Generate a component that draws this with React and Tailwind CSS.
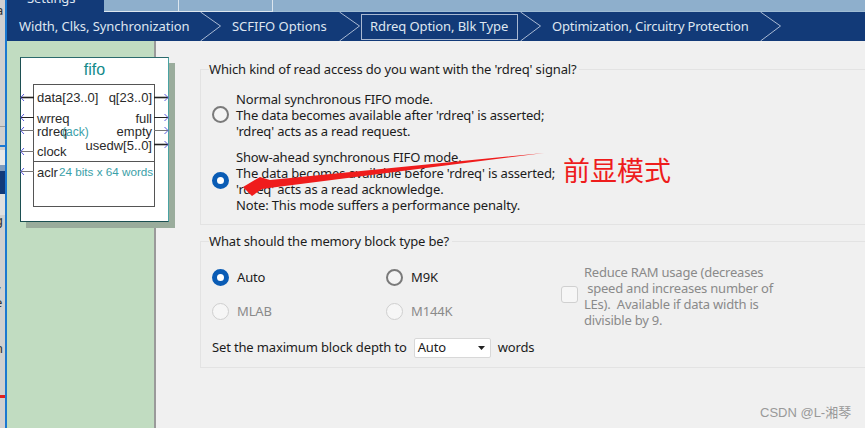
const ui = { fontFamily: '"Noto Sans", sans-serif' };
const arial = { fontFamily: '"Liberation Sans", sans-serif' };

function Chevron() {
  return (
    <svg width="22" height="29" viewBox="0 0 22 29" className="shrink-0">
      <path d="M0.5 0 L20.5 14 L0.5 29" fill="none" stroke="#a9b9d2" strokeWidth="1" />
    </svg>
  );
}

function Radio({ checked, disabled, nudge }) {
  const extra = nudge ? " -mt-[2px]" : "";
  if (checked) {
    return <span className={"block w-[17px] h-[17px] shrink-0 rounded-full border-[5px] border-[#0a5cb5] bg-white" + extra} />;
  }
  return (
    <span
      className={
        (disabled
          ? "block w-[17px] h-[17px] shrink-0 rounded-full border border-[#cfcfcf] bg-[#f6f6f6]"
          : "block w-[17px] h-[17px] shrink-0 rounded-full border-2 border-[#7a7a7a] bg-[#f4f4f4]") + extra
      }
    />
  );
}

function Pin({ x, y, side, thick, gray }) {
  const color = gray ? "#777" : "#222";
  return (
    <svg className="absolute" style={{ left: x, top: y }} width="15" height="9" viewBox="0 0 15 9">
      <path d="M0 4.5 H14" stroke={color} strokeWidth={thick ? 1.6 : 1} />
      {side === "l" ? (
        <path d="M4 1 L0.8 4.5 L4 8" fill="none" stroke="#5a5ae0" strokeWidth="1" />
      ) : (
        <path d="M10.5 1 L14 4.5 L10.5 8" fill="none" stroke="#5a5ae0" strokeWidth="1" />
      )}
    </svg>
  );
}

function Label({ x, y, children, right, color = "#2a2a2a", size = 13 }) {
  const pos = right ? { right: x, top: y } : { left: x, top: y };
  return (
    <span className="absolute whitespace-nowrap leading-none tracking-normal" style={{ ...pos, ...arial, color, fontSize: size }}>
      {children}
    </span>
  );
}

function Symbol() {
  return (
    <div className="relative w-[149px] h-[165px] ml-[13px] mt-[16px] bg-white border border-[#1c4f52] border-r-[#4aa3a3] border-t-[#2c6a6c] shadow-[6px_6px_0_0_#9aac9c]">
      <div className="text-center text-[#138a8a] text-[16px] leading-none mt-[4px] tracking-normal" style={arial}>fifo</div>
      <div className="absolute left-[12px] top-[26px] w-[122px] h-[123px] border border-[#555]">
        <div className="absolute left-0 right-0 top-[76px] border-t border-[#555]" />
      </div>
      <Pin x={-1} y={35} side="l" thick />
      <Pin x={-1} y={55} side="l" />
      <Pin x={-1} y={68} side="l" gray />
      <Pin x={-1} y={89} side="l" gray />
      <Pin x={-1} y={109} side="l" gray />
      <Pin x={133} y={35} side="r" thick />
      <Pin x={133} y={55} side="r" />
      <Pin x={133} y={68} side="r" gray />
      <Pin x={133} y={82} side="r" thick />
      <Label x={16} y={33}>data[23..0]</Label>
      <Label x={16} y={54}>wrreq</Label>
      <Label x={16} y={67}>rdreq</Label>
      <Label x={41} y={68} color="#3aa0a8" size={12}>(ack)</Label>
      <Label x={16} y={87}>clock</Label>
      <Label x={16} y={108}>aclr</Label>
      <Label x={38} y={108} color="#3aa0a8" size={11.7}>24 bits x 64 words</Label>
      <Label right x={16} y={33}>q[23..0]</Label>
      <Label right x={16} y={54}>full</Label>
      <Label right x={16} y={67}>empty</Label>
      <Label right x={16} y={81}>usedw[5..0]</Label>
    </div>
  );
}

function Group({ title, children, className }) {
  return (
    <div className={"relative border border-[#e3e3e3] border-r-0 " + className}>
      <span className="absolute left-[8px] top-[-10px] bg-[#f0f0f0] pr-[3px] text-[13px] leading-[18px] text-[#1c1c1c] whitespace-nowrap">
        {title}
      </span>
      {children}
    </div>
  );
}

export default function App() {
  return (
    <div className="flex w-[865px] h-[428px] overflow-hidden bg-[#f0f0f0] tracking-[-0.15px]" style={ui}>
      {/* window behind */}
      <div className="relative w-[5px] shrink-0 bg-[#d0d0d0] overflow-hidden text-[13px] text-[#333]">
        <span className="absolute left-[-4px] top-[4px] leading-none">a</span>
        <div className="absolute left-0 right-0 top-[126px] h-px bg-[#9a9a9a]" />
        <div className="absolute left-0 right-0 top-[145px] h-[2px] bg-[#1b78d0]" />
        <div className="absolute left-0 right-0 top-[150px] h-[15px] bg-[#e8e8e8]" />
        <div className="absolute left-0 right-0 top-[165px] h-[6px] bg-[#7f9bbd]" />
        <div className="absolute left-0 right-0 top-[171px] h-[23px] bg-[#123a78]" />
        <div className="absolute left-0 right-0 top-[194px] h-[21px] bg-[#e0e0e0]" />
        <span className="absolute left-[-5px] top-[214px] leading-none">g</span>
        <span className="absolute left-[-6px] top-[283px] leading-none">v</span>
        <span className="absolute left-[-5px] top-[296px] leading-none">e</span>
        <span className="absolute left-[-5px] top-[342px] leading-none">n</span>
        <span className="absolute left-0 top-[395px] w-[5px] h-[3px] bg-[#e02020]" />
      </div>
      <div className="flex-1 min-w-0 flex flex-col border-l-2 border-[#1b78d0]">
        {/* tabs */}
        <div className="flex h-[12px] bg-[#8eafcc] shrink-0 overflow-hidden">
          <div className="w-[97px] bg-[#123a78] text-[#dfe6f0] text-[13px] leading-[18px] pl-[20px] -mt-[11px] h-[23px]">Settings</div>
          <div className="w-[75px] border-r border-b border-[#dce6ef]" />
          <div className="w-[94px] border-r border-b border-[#dce6ef]" />
          <div className="flex-1 border-b border-[#9fbcd4]" />
        </div>
        {/* wizard steps */}
        <div className="flex items-center h-[29px] bg-[#123a78] text-[#dfe6f0] text-[13px] shrink-0">
          <span className="pl-[12px] w-[193px] whitespace-nowrap tracking-[-0.07px]">Width, Clks, Synchronization</span>
          <Chevron />
          <span className="pl-[10px] w-[117px] whitespace-nowrap tracking-[-0.03px]">SCFIFO Options</span>
          <Chevron />
          <span className="mr-[2px] h-[26px] w-[157px] flex items-center pl-[8px] border border-[#a9b9d2] whitespace-nowrap tracking-[-0.08px]">Rdreq Option, Blk Type</span>
          <Chevron />
          <span className="pl-[10px] w-[218px] whitespace-nowrap tracking-[-0.2px]">Optimization, Circuitry Protection</span>
          <Chevron />
        </div>
        {/* body */}
        <div className="flex flex-1 min-h-0">
          <div className="w-[149px] shrink-0 bg-[#c1dcc1] border-r-2 border-[#9a9a9a]">
            <Symbol />
          </div>
          <div className="flex-1 min-w-0 relative pl-[44px] pt-[28px] text-[13px] text-[#1c1c1c]">
            <Group title="Which kind of read access do you want with the 'rdreq' signal?" className="h-[156px]">
              <div className="flex items-center gap-[7px] pl-[11px] pt-[21px] leading-[16px]">
                <Radio nudge />
                <div>
                  <div>Normal synchronous FIFO mode.</div>
                  <div>The data becomes available after 'rdreq' is asserted;</div>
                  <div>'rdreq' acts as a read request.</div>
                </div>
              </div>
              <div className="flex items-center gap-[7px] pl-[11px] pt-[10px] leading-[16px]">
                <Radio checked nudge />
                <div>
                  <div>Show-ahead synchronous FIFO mode.</div>
                  <div>The data becomes available before 'rdreq' is asserted;</div>
                  <div>'rdreq' acts as a read acknowledge.</div>
                  <div>Note: This mode suffers a performance penalty.</div>
                </div>
              </div>
            </Group>
            <Group title="What should the memory block type be?" className="h-[127px] mt-[16px]">
              <div className="flex pl-[11px] pt-[18px]">
                <div className="w-[174px]">
                  <div className="flex items-center gap-[8px] h-[34px]"><Radio checked /><span className="mt-[2px]">Auto</span></div>
                  <div className="flex items-center gap-[8px] h-[34px] text-[#8a8a8a]"><Radio disabled /><span className="mt-[2px]">MLAB</span></div>
                </div>
                <div className="w-[175px]">
                  <div className="flex items-center gap-[8px] h-[34px]"><Radio /><span className="mt-[2px]">M9K</span></div>
                  <div className="flex items-center gap-[8px] h-[34px] text-[#8a8a8a]"><Radio disabled /><span className="mt-[2px]">M144K</span></div>
                </div>
                <div className="flex items-center gap-[6px] text-[#8a8a8a] leading-[16px] h-[68px]">
                  <span className="block w-[17px] h-[17px] border border-[#d0d0d0] rounded-[3px] bg-[#f6f6f6]" />
                  <div className="whitespace-pre mt-[3px] tracking-[-0.22px]">
                    <div>Reduce RAM usage (decreases</div>
                    <div> speed and increases number of</div>
                    <div>LEs).  Available if data width is</div>
                    <div>divisible by 9.</div>
                  </div>
                </div>
              </div>
              <div className="flex items-center pl-[11px] mt-[10px]">
                <span>Set the maximum block depth to</span>
                <span className="ml-[7px] w-[77px] h-[20px] flex items-center justify-between pl-[3px] pr-[5px] bg-white border border-[#d8d8d8] rounded-[2px]">
                  Auto
                  <svg width="7" height="4" viewBox="0 0 7 4"><path d="M0 0 H7 L3.5 4 Z" fill="#222" /></svg>
                </span>
                <span className="ml-[7px]">words</span>
              </div>
            </Group>
            <span className="absolute left-[604px] top-[365px] text-[13px] leading-none tracking-normal text-[#999999] whitespace-nowrap" style={{ fontFamily: '"Liberation Sans", "Noto Sans CJK SC", sans-serif' }}>
              CSDN @L-湘琴
            </span>
          </div>
        </div>
      </div>
      {/* annotation */}
      <svg className="absolute left-0 top-0 pointer-events-none" width="865" height="428" viewBox="0 0 865 428">
        <path d="M544 153 L270 180 L260 177 L243 187 L252 196 L262 189 L277 187 Z" fill="#ef1c1c" />
      </svg>
      <span className="absolute left-[563px] top-[151px] text-[27px] leading-[38px] tracking-normal text-[#ee1c1c] whitespace-nowrap" style={{ fontFamily: '"Noto Sans CJK SC", sans-serif' }}>
        前显模式
      </span>
    </div>
  );
}
